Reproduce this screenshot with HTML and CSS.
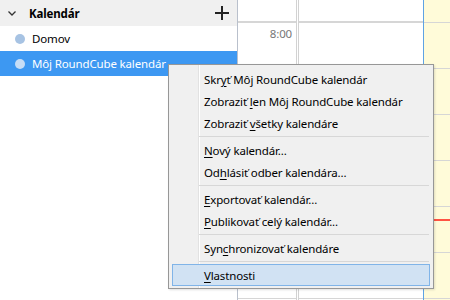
FILE: index.html
```html
<!DOCTYPE html>
<html lang="sk">
<head>
  <meta charset="UTF-8">
  <title>Kalendár</title>
  <link rel="stylesheet" href="styles.css">
</head>
<body>
  <div class="app">
    <!-- zoznam kalendárov -->
    <aside class="sidebar">
      <div class="cal-head">
        <svg class="chevron" width="8" height="5" viewBox="0 0 8 5"><polyline points="0.5,0.5 4,4 7.5,0.5" fill="none" stroke="#333" stroke-width="1.3"/></svg>
        <span class="cal-title">Kalendár</span>
        <svg class="add" width="14" height="14" viewBox="0 0 14 14"><path d="M7 0V14M0 7H14" stroke="#222" stroke-width="2"/></svg>
      </div>
      <ul class="cal-list">
        <li class="cal-item"><span class="dot"></span>Domov</li>
        <li class="cal-item selected"><span class="dot"></span>Môj RoundCube kalendár</li>
      </ul>
    </aside>

    <!-- denný pohľad -->
    <main class="view">
      <div class="col time-col">
        <div class="allday"></div>
        <div class="slot"><span class="hour">8:00</span></div>
        <div class="slot"></div>
        <div class="slot"></div>
        <div class="slot"></div>
        <div class="slot"></div>
        <div class="slot"></div>
      </div>
      <div class="col day-col">
        <div class="allday"></div>
        <div class="slot"></div>
        <div class="slot"></div>
        <div class="slot"></div>
        <div class="slot"></div>
        <div class="slot"></div>
        <div class="slot"></div>
      </div>
      <div class="col today-col">
        <div class="allday"></div>
        <div class="slot"></div>
        <div class="slot"></div>
        <div class="slot"></div>
        <div class="slot"></div>
        <div class="slot"></div>
        <div class="slot"></div>
        <div class="now-line" style="top: 219px;"></div>
      </div>
    </main>
  </div>

  <!-- kontextové menu -->
  <div class="menu">
    <div class="item">Skr<u>y</u>ť Môj RoundCube kalendár</div>
    <div class="item">Zobraziť <u>l</u>en Môj RoundCube kalendár</div>
    <div class="item">Zobraziť <u>v</u>šetky kalendáre</div>
    <div class="sep"></div>
    <div class="item"><u>N</u>ový kalendár...</div>
    <div class="item">Od<u>h</u>lásiť odber kalendára...</div>
    <div class="sep"></div>
    <div class="item"><u>E</u>xportovať kalendár...</div>
    <div class="item"><u>P</u>ublikovať celý kalendár...</div>
    <div class="sep"></div>
    <div class="item">Syn<u>c</u>hronizovať kalendáre</div>
    <div class="sep"></div>
    <div class="item active"><u>V</u>lastnosti</div>
  </div>
</body>
</html>
```

FILE: styles.css
```css
/* základ */
* {
  box-sizing: border-box;
}
body {
  margin: 0;
  width: 450px;
  height: 300px;
  overflow: hidden;
  font-family: "Noto Sans", "Liberation Sans", sans-serif;
  font-size: 11.5px;
  letter-spacing: -0.15px;
  color: #000;
  background: #fff;
}
.app {
  display: flex;
  height: 300px;
}

/* bočný panel */
.sidebar {
  width: 238px;
  flex: 0 0 238px;
  border-right: 1px solid #b9c0cc;
}
.cal-head {
  height: 26px;
  background: #f0f0f0;
  display: flex;
  align-items: center;
  padding-left: 8px;
  padding-right: 8px;
}
.chevron {
  margin-right: 13px;
}
.cal-title {
  font-weight: bold;
  flex: 1;
}
.cal-list {
  list-style: none;
  margin: 0;
  padding: 0;
}
.cal-item {
  height: 25px;
  display: flex;
  align-items: center;
  padding-left: 15px;
}
.dot {
  width: 10px;
  height: 10px;
  border-radius: 50%;
  background: #a7c3e3;
  margin-right: 7px;
}
.selected {
  background: #3d98f2;
  color: #fff;
}
.selected .dot {
  background: #c6ddf6;
}

/* mriežka dňa */
.view {
  flex: 1;
  display: flex;
}
.col {
  position: relative;
}
.time-col {
  width: 59px;
  border-right: 1px solid #d2d2d2;
}
.day-col {
  width: 125px;
  margin-left: 1px;
  border-left: 1px solid #d2d2d2;
}
.today-col {
  flex: 1;
  background: #fffbd9;
  border-left: 1px solid #5ea3e4;
}
.allday {
  height: 23px;
  border-bottom: 2px solid #d6d6d6;
}
.today-col .allday {
  border-bottom-width: 1px;
  height: 23px;
}
.slot {
  height: 46px;
  border-bottom: 1px solid #d6d6d6;
}
.hour {
  display: block;
  text-align: right;
  padding: 3px 4px 0 0;
  color: #777;
}
.now-line {
  position: absolute;
  left: 0;
  right: 0;
  height: 2px;
  background: #ff5343;
}

/* kontextové menu */
.menu {
  position: absolute;
  left: 168px;
  top: 64px;
  width: 266px;
  padding: 3px 0 2px;
  border: 1px solid #979797;
  background: linear-gradient(to right, transparent 29px, #e2e2e2 29px, #e2e2e2 30px, #fff 30px, #fff 31px, transparent 31px), #f0f0f0;
  box-shadow: 1px 1px 2px rgba(0, 0, 0, 0.12);
}
.item {
  height: 22px;
  line-height: 19px;
  padding-top: 1px;
  margin: 0 3px;
  padding-left: 31px;
  border: 1px solid transparent;
  white-space: nowrap;
}
.item u {
  text-underline-offset: 2px;
}
.item.active {
  background: #d1e2f3;
  border-color: #80b4e8;
}
.sep {
  height: 1px;
  margin: 2px 4px 2px 30px;
  background: #d7d7d7;
}
```
